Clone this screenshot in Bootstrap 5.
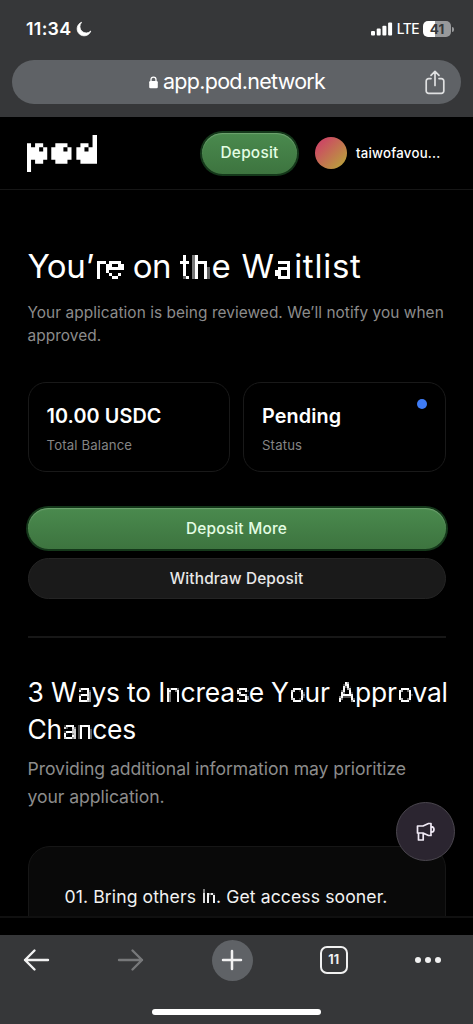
<!DOCTYPE html>
<html lang="en">
<head>
<meta charset="utf-8">
<meta name="viewport" content="width=device-width, initial-scale=1">
<title>pod – Waitlist</title>
<link href="https://cdn.jsdelivr.net/npm/bootstrap@5.3.0/dist/css/bootstrap.min.css" rel="stylesheet">
<style>
  body { font-family: Inter, "Liberation Sans", sans-serif; background: #000; color: #fff; height: 1024px; overflow: hidden; }
  svg { display: block; flex: none; }
  .chrome-top { background: #363739; height: 117px; }
  .status-row { height: 60px; padding: 0 20px 2px 26px; }
  .clock { font-size: 17.8px; font-weight: 600; letter-spacing: .3px; }
  .moon { margin-left: 5px; }
  .lte { font-size: 13.8px; font-weight: 500; letter-spacing: -.5px; margin: 0 4px 0 4px; }
  .batt { width: 28px; height: 16px; border-radius: 5px; background: linear-gradient(90deg, #fff 42%, #98999b 42%); color: #363739; font-size: 13.5px; font-weight: 700; line-height: 16px; }
  .batt-tip { width: 2px; height: 5px; border-radius: 0 2px 2px 0; background: #98999b; margin-left: 1px; margin-right: -1px; }
  .url-bar { height: 44px; margin: 0 12px; border-radius: 22px; background: #5f6266; font-size: 21.5px; letter-spacing: -.72px; padding-left: 137px; padding-right: 16px; }
  .url-text { margin-left: 5px; margin-top: -2px; }
  .site-head { height: 73px; border-bottom: 1px solid #161616; padding: 0 32px 0 27px; }
  .btn-pod { border-radius: 50px; border: 0; color: #e3fde3; font-size: 15.4px; font-weight: 500; letter-spacing: .22px; background: linear-gradient(#4a8a4e, #3d743f); box-shadow: 0 0 0 2px #14381a, inset 0 1px 1px #6fa371; height: 41px; padding: 0; }
  .btn-pod:hover { color: #e3fde3; }
  .btn-dim { border-radius: 50px; border: 1px solid #242424; color: #e8e8e8; font-size: 15.4px; font-weight: 500; letter-spacing: .15px; background: #1a1a1a; height: 41px; padding: 0; }
  .head-btn { width: 95px; margin-right: 18px; }
  .avatar { width: 32px; height: 32px; background: linear-gradient(135deg, #cb4c62 20%, #b9a03c 90%); margin-right: 9px; }
  .user-name { font-size: 13.2px; font-weight: 500; letter-spacing: .25px; width: 85px; white-space: nowrap; padding-top: 1px; }
  .page { height: 726px; padding: 56px 27.5px 0; overflow: hidden; }
  h1 { font-size: 33px; font-weight: 400; line-height: 40px; letter-spacing: .75px; margin: 0 0 15px; white-space: nowrap; }
  .snug { letter-spacing: -.5px; }
  .lede { font-size: 15.4px; line-height: 23px; letter-spacing: .06px; color: #8c8c8c; margin: 0 -4px 35px 0; }
  .stat { height: 90px; border: 1px solid #191919; border-radius: 18px; padding: 18px 18px 0; }
  .stat-value { font-size: 19.8px; font-weight: 600; line-height: 30px; letter-spacing: .1px; }
  .stat-label { font-size: 13.2px; letter-spacing: .15px; line-height: 20px; color: #858585; margin-top: 4px; }
  .dot { width: 10px; height: 10px; background: #3f7cf6; margin-top: -2px; }
  .stats { gap: 13px; margin-bottom: 36px; }
  .actions { gap: 9px; }
  .rule { height: 2px; background: #171717; margin: 37px 0 36px; }
  h2 { font-size: 26.4px; font-weight: 400; line-height: 37px; margin: 0 -20px 7px 0; letter-spacing: -.17px; }
  .note { font-size: 17.6px; line-height: 27.5px; color: #8c8c8c; margin: 0 0 36px; letter-spacing: -.06px; }
  .way { border: 1px solid #161616; border-radius: 22px; background: #090909; height: 200px; padding: 36px 36px; font-size: 17.6px; letter-spacing: .1px; line-height: 27px; white-space: nowrap; color: #f2f2f2; }
  .px { display: inline-block; filter: url(#mosaic3); }
  h2 .px, .way .px { filter: url(#mosaic2); }
  .foot-line { height: 19px; border-top: 2px solid #101010; background: #000; }
  .chrome-bottom { height: 89px; background: #363739; }
  .tools { height: 50px; padding: 0 32px 0 23px; }
  .plus { width: 41px; height: 41px; background: #5f6266; }
  .tabs-box { width: 28px; height: 28px; border: 2.3px solid #f1f1f1; border-radius: 7px; font-size: 12.5px; font-weight: 700; color: #f1f1f1; }
  .home-bar { width: 169px; height: 6px; border-radius: 3px; background: #fff; margin: 24px 0 0 152px; }
  .fab { position: absolute; left: 396px; top: 802px; width: 59px; height: 59px; background: #2b2530; border: 1.5px solid #4a464e; }
</style>
</head>
<body>
<!-- pixelates the display-face letters -->
<svg width="0" height="0" class="position-absolute">
  <filter id="mosaic3" filterUnits="userSpaceOnUse" x="0" y="0" width="60" height="44" color-interpolation-filters="sRGB">
    <feFlood x="1" y="1" width="1" height="1" flood-color="#fff" result="dot"/>
    <feOffset in="dot" dx="0" dy="0" x="0" y="0" width="3" height="3"/>
    <feTile x="0" y="0" width="60" height="44" result="grid"/>
    <feComposite in="SourceGraphic" in2="grid" operator="in"/>
    <feComponentTransfer><feFuncA type="linear" slope="6" intercept="-1.2"/></feComponentTransfer>
    <feMorphology operator="dilate" radius="1"/>
  </filter>
  <filter id="mosaic2" filterUnits="userSpaceOnUse" x="0" y="0" width="60" height="44" color-interpolation-filters="sRGB">
    <feFlood x="0" y="0" width="1" height="1" flood-color="#fff" result="dot"/>
    <feOffset in="dot" dx="0" dy="0" x="0" y="0" width="2" height="2"/>
    <feTile x="0" y="0" width="60" height="44" result="grid"/>
    <feComposite in="SourceGraphic" in2="grid" operator="in" result="a"/>
    <feOffset in="a" dx="1" dy="0" result="b"/>
    <feMerge result="row"><feMergeNode in="a"/><feMergeNode in="b"/></feMerge>
    <feOffset in="row" dx="0" dy="1" result="c"/>
    <feMerge><feMergeNode in="row"/><feMergeNode in="c"/></feMerge>
  </filter>
</svg>

<header class="chrome-top">
  <div class="status-row d-flex align-items-center">
    <span class="clock">11:34</span>
    <svg class="moon" width="16" height="16" viewBox="0 0 16 16"><path d="M5.600 1.300a7 7 0 1 0 9.200 8.700A5.600 5.600 0 0 1 5.600 1.300z" fill="#fff" stroke="#fff" stroke-width=".8" stroke-linejoin="round"/></svg>
    <svg class="ms-auto" width="22" height="14" viewBox="0 0 22 14" fill="#fff"><rect x="0" y="9" width="4" height="4.500" rx="1"/><rect x="5.700" y="6.500" width="4" height="7" rx="1"/><rect x="11.400" y="3.700" width="4" height="9.800" rx="1"/><rect x="17.100" y=".6" width="4" height="12.900" rx="1"/></svg>
    <span class="lte">LTE</span>
    <span class="batt text-center">41</span><span class="batt-tip"></span>
  </div>
  <div class="url-bar d-flex align-items-center">
    <svg width="9" height="13" viewBox="0 0 9 13"><rect x=".2" y="5" width="8.600" height="7.200" rx="1.300" fill="#fff"/><path d="M2 5.500V3.600a2.500 2.500 0 0 1 5 0v1.900" fill="none" stroke="#fff" stroke-width="1.300"/></svg>
    <span class="url-text">app.pod.network</span>
    <svg class="ms-auto" width="20" height="25" viewBox="0 0 20 25" fill="none" stroke="#dfe0e1" stroke-width="1.700" stroke-linecap="round" stroke-linejoin="round"><path d="M6 8.600H3.600A2.400 2.400 0 0 0 1.200 11v10a2.400 2.400 0 0 0 2.400 2.400h12.800a2.400 2.400 0 0 0 2.400-2.400V11a2.400 2.400 0 0 0-2.400-2.400H14M10 15.500V1.600M6 5.400l4-4 4 4"/></svg>
  </div>
</header>

<div class="site-head d-flex align-items-center">
  <svg width="70" height="37" viewBox="0 0 17.3 9" preserveAspectRatio="none" fill="#fff" role="img" aria-label="pod">
    <path d="M0 2h1v1h1v-1h2v1h1v3h-1v1h-2v-1h-1v3h-1zM3 3v1h1v-1z"/>
    <path d="M7 2h3v1h1v3h-1v1h-3v-1h-1v-3h1zM9 3v1h1v-1z"/>
    <path d="M16.200 0h1.100v7h-4.100v-1h-1v-3h1v-1h2v1h1zM14.200 3v1h1v-1z"/>
  </svg>
  <button class="btn btn-pod head-btn ms-auto">Deposit</button>
  <span class="avatar rounded-circle"></span>
  <span class="user-name">taiwofavou...</span>
</div>

<main class="page">
  <h1><span class="snug">You’<span class="px">re</span> on </span><span class="px">th</span>e W<span class="px">a</span>itlist</h1>
  <p class="lede">Your application is being reviewed. We’ll notify you when approved.</p>
  <div class="stats d-flex">
    <div class="stat flex-fill w-50"><div class="stat-value">10.00 USDC</div><div class="stat-label">Total Balance</div></div>
    <div class="stat flex-fill w-50 d-flex justify-content-between"><div><div class="stat-value">Pending</div><div class="stat-label">Status</div></div><span class="dot rounded-circle"></span></div>
  </div>
  <div class="actions d-grid">
    <button class="btn btn-pod">Deposit More</button>
    <button class="btn btn-dim">Withdraw Deposit</button>
  </div>
  <div class="rule"></div>
  <h2><span class="d-block text-nowrap">3 W<span class="px">a</span>ys to I<span class="px">n</span>crea<span class="px">s</span>e Y<span class="px">o</span>ur <span class="px">A</span>ppr<span class="px">o</span>val</span> <span class="d-block">Ch<span class="px">an</span>ces</span></h2>
  <p class="note">Providing additional information may prioritize<br>your application.</p>
  <div class="way">01. Bring others <span class="px">in</span>. Get access sooner.</div>
</main>
<div class="foot-line"></div>

<footer class="chrome-bottom">
  <div class="tools d-flex align-items-center justify-content-between">
    <svg width="27" height="24" viewBox="0 0 27 24" fill="none" stroke="#f1f1f1" stroke-width="2.400" stroke-linecap="round" stroke-linejoin="round"><path d="M25 12H2M11.500 2.500 2 12l9.500 9.500"/></svg>
    <svg width="27" height="24" viewBox="0 0 27 24" fill="none" stroke="#77787a" stroke-width="2.400" stroke-linecap="round" stroke-linejoin="round"><path d="M2 12h23M15.500 2.500 25 12l-9.500 9.500"/></svg>
    <span class="plus rounded-circle d-flex align-items-center justify-content-center"><svg width="22" height="22" viewBox="0 0 22 22" stroke="#f1f1f1" stroke-width="2.500" stroke-linecap="round"><path d="M11 2v18M2 11h18"/></svg></span>
    <span class="tabs-box d-flex align-items-center justify-content-center">11</span>
    <svg width="26" height="6" viewBox="0 0 26 6" fill="#f1f1f1"><circle cx="3" cy="3" r="3"/><circle cx="13" cy="3" r="3"/><circle cx="23" cy="3" r="3"/></svg>
  </div>
  <div class="home-bar"></div>
</footer>

<div class="fab rounded-circle d-flex align-items-center justify-content-center">
  <svg width="20" height="20" viewBox="0 0 20 20" fill="none" stroke="#f0eaf5" stroke-width="1.700" stroke-linejoin="round"><path d="M1.500 4h5.500L12.500 1.500H15v12h-2.500L7 11H1.500zM2.500 11v7h4.700v-7M15 4.700c4 .2 4 5.400 0 5.600"/></svg>
</div>
<script src="https://cdn.jsdelivr.net/npm/bootstrap@5.3.0/dist/js/bootstrap.bundle.min.js"></script>
</body>
</html>
